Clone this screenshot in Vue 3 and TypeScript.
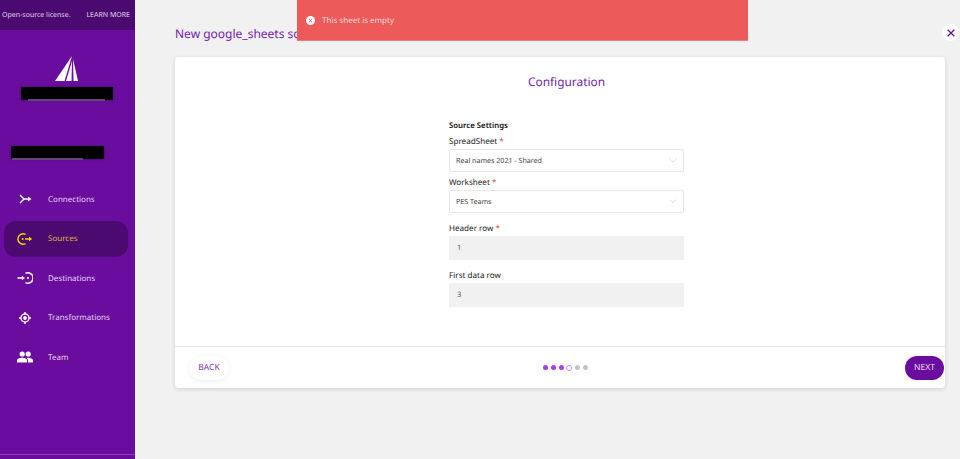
<script setup lang="ts">
const nav = [
  { label: 'Connections', icon: 'conn' },
  { label: 'Sources', icon: 'src', active: true },
  { label: 'Destinations', icon: 'dest' },
  { label: 'Transformations', icon: 'trans' },
  { label: 'Team', icon: 'team' },
]
const dots = ['on', 'on', 'on', 'cur', 'off', 'off']
</script>

<template>
  <div class="app">
    <aside class="side">
      <div class="license">
        <span>Open-source license.</span>
        <span class="learn">LEARN MORE</span>
      </div>
      <div class="logo">
        <svg width="24" height="26" viewBox="0 0 24 26">
          <path d="M18 0 L1 25 L10.5 25 Z" fill="#fff" />
          <path d="M18 5 L12 25 L17.5 25 Z" fill="#fff" />
          <path d="M19 3 L19.5 25 L24 25 Z" fill="#fff" />
        </svg>
      </div>
      <div class="redact first"><i></i></div>
      <div class="redact second"><i></i></div>
      <nav class="nav">
        <div v-for="n in nav" :key="n.label" class="item" :class="{ active: n.active }">
          <span class="ico">
            <svg v-if="n.icon === 'conn'" width="16" height="16" viewBox="0 0 16 16" fill="none" stroke="currentColor" stroke-width="1.4">
              <path d="M3 4 L7 8 H12 M3 12 L7 8" />
              <path d="M11 5.5 L14.5 8 L11 10.5 Z" fill="currentColor" stroke="none" />
            </svg>
            <svg v-else-if="n.icon === 'src'" width="16" height="16" viewBox="0 0 16 16" fill="none" stroke="currentColor" stroke-width="1.5">
              <path d="M8.5 3.4 A5.2 5.2 0 1 0 8.5 12.6" />
              <circle cx="5.6" cy="8" r="1" fill="currentColor" stroke="none" />
              <path d="M8 8 H12.5" />
              <path d="M12 5.8 L15.2 8 L12 10.2 Z" fill="currentColor" stroke="none" />
            </svg>
            <svg v-else-if="n.icon === 'dest'" width="16" height="16" viewBox="0 0 16 16" fill="none" stroke="currentColor" stroke-width="1.5">
              <path d="M8.5 3.4 A5.2 5.2 0 1 1 8.5 12.6" />
              <circle cx="11" cy="8" r="1" fill="currentColor" stroke="none" />
              <path d="M0.5 8 H5" />
              <path d="M4.8 5.8 L8 8 L4.8 10.2 Z" fill="currentColor" stroke="none" />
            </svg>
            <svg v-else-if="n.icon === 'trans'" width="16" height="16" viewBox="0 0 16 16" fill="none" stroke="currentColor" stroke-width="1.4">
              <circle cx="8" cy="8" r="4" />
              <circle cx="8" cy="8" r="1.9" fill="currentColor" stroke="none" />
              <path d="M8 2 V4 M8 12 V14 M2 8 H4 M12 8 H14" />
            </svg>
            <svg v-else width="16" height="16" viewBox="0 0 16 16" fill="currentColor">
              <circle cx="5.2" cy="5" r="2.6" />
              <circle cx="11.2" cy="5" r="2.6" />
              <path d="M0 13.5 V11.5 C0 9.5 3 8.7 5.2 8.7 C7.4 8.7 10 9.5 10 11.5 V13.5 Z" />
              <path d="M11 13.5 V11.5 C11 10.5 10.6 9.5 9.6 8.9 C12 8.4 16 9.5 16 11.5 V13.5 Z" />
            </svg>
          </span>
          <span class="lbl">{{ n.label }}</span>
        </div>
      </nav>
      <div class="rule"></div>
    </aside>

    <main class="main">
      <h1 class="title">New google_sheets source</h1>
      <section class="card">
        <div class="body">
          <h2 class="heading">Configuration</h2>
          <form class="form">
            <div class="group">Source Settings</div>
            <label class="label l1">SpreadSheet <b>*</b></label>
            <div class="select">
              <span>Real names 2021 - Shared</span>
              <svg width="8" height="5" viewBox="0 0 8 5" fill="none" stroke="#d8d8d8" stroke-width="0.8"><path d="M0.5 0.5 L4 4 L7.5 0.5" /></svg>
            </div>
            <label class="label l2">Worksheet <b>*</b></label>
            <div class="select">
              <span>PES Teams</span>
              <svg width="8" height="5" viewBox="0 0 8 5" fill="none" stroke="#d8d8d8" stroke-width="0.8"><path d="M0.5 0.5 L4 4 L7.5 0.5" /></svg>
            </div>
            <label class="label l3">Header row <b>*</b></label>
            <div class="input">1</div>
            <label class="label l4">First data row</label>
            <div class="input">3</div>
          </form>
        </div>
        <footer class="foot">
          <button class="btn back" type="button">BACK</button>
          <div class="dots">
            <span v-for="(d, i) in dots" :key="i" class="dot" :class="d"></span>
          </div>
          <button class="btn next" type="button">NEXT</button>
        </footer>
      </section>
    </main>

    <div class="toast">
      <span class="tx">
        <svg width="9" height="9" viewBox="0 0 9 9"><circle cx="4.5" cy="4.5" r="4.5" fill="#fff" /><path d="M3 3 L6 6 M6 3 L3 6" stroke="#ee5a5a" stroke-width="0.9" /></svg>
      </span>
      <span class="msg">This sheet is empty</span>
    </div>
    <button class="close" type="button" aria-label="Close">
      <svg width="8" height="8" viewBox="0 0 8 8"><path d="M0.7 0.7 L7.3 7.3 M7.3 0.7 L0.7 7.3" stroke="#6a0d9e" stroke-width="1.3" /></svg>
    </button>
  </div>
</template>

<style>
html, body { margin: 0; background: #f1f1f1; overflow: hidden; }
</style>

<style scoped>
.app {
  position: relative;
  display: flex;
  width: 960px;
  height: 459px;
  overflow: hidden;
  font-family: "Noto Sans", sans-serif;
  text-rendering: geometricPrecision;
  background: #f1f1f1;
}
.side {
  box-sizing: border-box;
  width: 136px;
  height: 459px;
  flex: none;
  background: #6a0d9e;
  border-right: 1px solid #f5eefa;
  display: flex;
  flex-direction: column;
  position: relative;
}
.license {
  height: 30px;
  flex: none;
  background: #4b0a70;
  color: #e0d0ec;
  font-size: 7px;
  display: flex;
  align-items: center;
  justify-content: space-between;
  padding: 0 5px 0 2px;
}
.logo {
  margin: 26px 0 0 54px;
  height: 26px;
}
.logo svg { display: block; }
.redact {
  background: #000;
  height: 13px;
  box-shadow: 0 0 2px rgba(40, 0, 70, 0.7);
  position: relative;
}
.redact i {
  position: absolute;
  bottom: -1px;
  height: 2px;
  background: #5f4a72;
}
.redact.first { width: 92px; margin: 5px 0 0 21px; }
.redact.first i { left: 7px; width: 77px; }
.redact.second { width: 93px; margin: 46px 0 0 11px; }
.redact.second i { left: 1px; width: 71px; }
.nav {
  margin-top: 22px;
  display: flex;
  flex-direction: column;
  padding: 0 7px 0 4px;
}
.item {
  height: 36px;
  margin-bottom: 3.5px;
  display: flex;
  align-items: center;
  border-radius: 12px;
  color: #fff;
  padding-left: 13px;
  font-size: 8px;
}
.item .lbl { color: #e3d4ee; margin-left: 15px; }
.item.active { background: #4b0a70; color: #f5d800; }
.item.active .lbl { color: #dcb437; }
.ico { width: 16px; height: 16px; display: flex; }
.rule {
  position: absolute;
  left: 0;
  right: 0;
  top: 454px;
  height: 1px;
  background: #8a45b5;
}
.main {
  flex: 1;
  min-width: 0;
  padding: 0 15px 0 39px;
  box-sizing: border-box;
}
.title {
  margin: 24px 0 0;
  height: 33px;
  font-size: 12px;
  line-height: 19px;
  font-weight: 400;
  color: #7420ae;
  white-space: nowrap;
}
.card {
  height: 331px;
  background: #fff;
  border-radius: 4px;
  box-shadow: 0 1px 4px rgba(0, 0, 0, 0.14);
  display: flex;
  flex-direction: column;
}
.body {
  flex: 1;
  box-sizing: border-box;
  padding: 15px 0 0 13px;
  display: flex;
  flex-direction: column;
  align-items: center;
}
.heading {
  margin: 0;
  font-size: 11.9px;
  line-height: 20px;
  font-weight: 400;
  color: #6f1fa8;
}
.form {
  width: 235px;
  margin-top: 28px;
  display: flex;
  flex-direction: column;
}
.group {
  font-size: 7.8px;
  line-height: 12px;
  font-weight: 600;
  color: #111;
}
.label {
  font-size: 8.1px;
  line-height: 12px;
  color: #222;
}
.label b { color: #e53935; font-weight: 400; }
.l1 { margin-top: 4px; margin-bottom: 1px; }
.l2 { margin-top: 5px; margin-bottom: 1px; }
.l3 { margin-top: 10px; margin-bottom: 1px; }
.l4 { margin-top: 10px; margin-bottom: 1px; }
.select {
  box-sizing: border-box;
  height: 23px;
  border: 1px solid #e6e6e6;
  border-radius: 2px;
  background: #fff;
  padding: 0 6px;
  display: flex;
  align-items: center;
  justify-content: space-between;
  font-size: 7.1px;
  color: #444;
}
.input {
  box-sizing: border-box;
  height: 24px;
  background: #f1f1f1;
  padding-left: 8px;
  display: flex;
  align-items: center;
  font-size: 7.5px;
  color: #555;
}
.foot {
  height: 42px;
  flex: none;
  box-sizing: border-box;
  border-top: 1px solid #e6e6e6;
  display: flex;
  align-items: center;
  justify-content: space-between;
  padding: 0 1px 0 14px;
  position: relative;
}
.btn {
  border: none;
  font-family: inherit;
  text-rendering: geometricPrecision;
  font-size: 8.5px;
  border-radius: 12px;
  height: 24px;
  padding: 0;
}
.back {
  width: 40px;
  background: #fff;
  color: #7b3ab0;
  box-shadow: 0 1px 4px rgba(0, 0, 0, 0.08);
}
.next {
  width: 39px;
  background: #6a0d9e;
  color: #e8daf2;
}
.dots {
  position: absolute;
  left: 367.5px;
  top: 17.5px;
  display: flex;
  gap: 3px;
  align-items: center;
}
.dot {
  box-sizing: border-box;
  width: 5px;
  height: 5px;
  border-radius: 50%;
}
.dot.on { background: #a83cf0; }
.dot.cur { background: #fff; border: 1px solid #c58ff0; width: 6px; height: 6px; margin: 0 -0.5px; }
.dot.off { background: #c4c4c4; }
.toast {
  position: absolute;
  left: 297px;
  top: 0;
  width: 451px;
  height: 41px;
  box-sizing: border-box;
  background: #ed5a5a;
  border-bottom: 1px solid #f47a7a;
  padding: 0 0 0 9px;
  display: flex;
  align-items: center;
  font-size: 8px;
  color: #fbdcdc;
}
.tx { width: 9px; height: 9px; display: flex; margin-top: 1px; }
.msg { margin-left: 7px; }
.close {
  position: absolute;
  left: 942px;
  top: 24px;
  width: 17px;
  height: 17px;
  border-radius: 50%;
  border: none;
  padding: 0;
  background: #fff;
  display: flex;
  align-items: center;
  justify-content: center;
}
</style>
